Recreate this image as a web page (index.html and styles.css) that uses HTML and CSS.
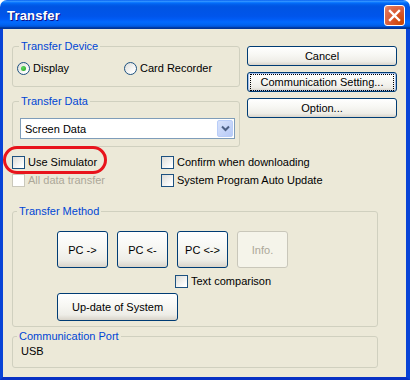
FILE: index.html
```html
<!DOCTYPE html>
<html>
<head>
    <title>Transfer</title>
    <link rel="stylesheet" href="styles.css">
</head>
<body>
    <div class="window">
        <div class="titlebar">
            <span class="title">Transfer</span>
            <button class="close" aria-label="Close">
                <svg width="13" height="13" viewBox="0 0 13 13">
                    <path d="M2 2 L11 11 M11 2 L2 11" stroke="#fff" stroke-width="2.4" stroke-linecap="square"/>
                </svg>
            </button>
        </div>
        <div class="client">
            <div class="top">
                <div class="left-col">
                    <fieldset class="group device">
                        <legend>Transfer Device</legend>
                        <div class="radios">
                            <label class="radio"><span class="dot checked"></span>Display</label>
                            <label class="radio"><span class="dot"></span>Card Recorder</label>
                        </div>
                    </fieldset>
                    <fieldset class="group data">
                        <legend>Transfer Data</legend>
                        <div class="combo">
                            <span class="combo-value">Screen Data</span>
                            <span class="combo-btn">
                                <svg width="9" height="7" viewBox="0 0 9 7">
                                    <path d="M1 1.5 L4.5 5 L8 1.5" fill="none" stroke="#4D6185" stroke-width="2"/>
                                </svg>
                            </span>
                        </div>
                    </fieldset>
                </div>
                <div class="side-buttons">
                    <button class="btn">Cancel</button>
                    <button class="btn default"><span class="focus">Communication Setting...</span></button>
                    <button class="btn">Option...</button>
                </div>
            </div>

            <div class="options">
                <label class="check marked"><span class="box"></span>Use Simulator</label>
                <label class="check"><span class="box"></span>Confirm when downloading</label>
                <label class="check disabled"><span class="box"></span>All data transfer</label>
                <label class="check"><span class="box"></span>System Program Auto Update</label>
            </div>

            <fieldset class="group method">
                <legend>Transfer Method</legend>
                <div class="method-body">
                    <div class="method-buttons">
                        <button class="btn big">PC -&gt;</button>
                        <button class="btn big">PC &lt;-</button>
                        <button class="btn big">PC &lt;-&gt;</button>
                        <button class="btn big" disabled>Info.</button>
                    </div>
                    <label class="check compare"><span class="box"></span>Text comparison</label>
                    <button class="btn update">Up-date of System</button>
                </div>
            </fieldset>

            <fieldset class="group port">
                <legend>Communication Port</legend>
                <div class="port-value">USB</div>
            </fieldset>
        </div>
    </div>
</body>
</html>
```

FILE: styles.css
```css
:root {
    --face-color: #ECE9D8;
    --group-border: #D0D0BF;
    --legend-color: #0046D5;
    --button-border: #003C74;
    --check-border: #1C5180;
    --disabled-text: #ACA899;
}

body {
    margin: 0;
    background: #ffffff;
    font-family: "Liberation Sans", Arial, sans-serif;
    font-size: 11px;
    color: #000;
}

.window {
    width: 410px;
    height: 380px;
    display: flex;
    flex-direction: column;
    border-radius: 7px 7px 0 0;
    overflow: hidden;
}

.titlebar {
    height: 29px;
    flex: none;
    display: flex;
    align-items: center;
    justify-content: space-between;
    padding: 0 5px 0 7px;
    box-sizing: border-box;
    background: linear-gradient(to bottom, #0058EE 0%, #3593FF 4%, #288EFF 6%, #127DFF 8%, #036FFC 10%, #0262EE 14%, #0057E5 20%, #0054E3 24%, #0055EB 56%, #005BF5 66%, #026AFE 76%, #0062EF 86%, #0052D6 92%, #0040AB 94%, #003092 100%);
}

.title {
    color: #fff;
    font-weight: bold;
    font-size: 13px;
    letter-spacing: 0.2px;
    text-shadow: 1px 1px 0 #0F1089;
    margin-top: 1px;
}

.close {
    width: 21px;
    height: 21px;
    padding: 0;
    margin-top: 2px;
    border: 1px solid #fff;
    border-radius: 3px;
    display: flex;
    align-items: center;
    justify-content: center;
    background: radial-gradient(circle at 85% 85%, #CC4600 0%, #D9572F 45%, #E17558 85%, #EC9F87 100%);
}

.client {
    flex: 1;
    background: var(--face-color);
    border-left: 3px solid #0843D6;
    border-right: 4px solid #0843D6;
    border-bottom: 3px solid #0831C4;
    padding: 10px 0 0 9px;
}

.top {
    display: flex;
    gap: 7px;
}

.left-col {
    width: 228px;
    display: flex;
    flex-direction: column;
}

/* group boxes keep zero side padding so the legend sits at a fixed inset */
.group {
    margin: 0;
    border: 1px solid var(--group-border);
    border-radius: 3px;
    padding: 0;
    min-width: 0;
}

.group legend {
    color: var(--legend-color);
    line-height: 14px;
    padding: 0 2px;
    margin-left: 6px;
}

.device {
    padding: 7px 0 10px;
}

.radios {
    display: grid;
    grid-template-columns: 107px auto;
    height: 16px;
    padding-left: 4px;
}

.radio {
    display: flex;
    align-items: center;
    gap: 3px;
}

.dot {
    width: 13px;
    height: 13px;
    box-sizing: border-box;
    border: 1px solid var(--check-border);
    border-radius: 50%;
    background: linear-gradient(135deg, #DCDCD7, #ffffff 80%);
    display: flex;
    align-items: center;
    justify-content: center;
}

.dot.checked::after {
    content: "";
    width: 5px;
    height: 5px;
    border-radius: 50%;
    background: radial-gradient(circle at 35% 35%, #5ED85E, #21A121);
}

.data {
    margin-top: 7px;
    padding: 10px 0 7px;
}

.combo {
    height: 21px;
    box-sizing: border-box;
    margin: 0 4px 0 7px;
    border: 1px solid #7F9DB9;
    background: #fff;
    display: flex;
    align-items: center;
    justify-content: space-between;
    padding: 1px;
}

.combo-value {
    padding-left: 3px;
}

.combo-btn {
    width: 16px;
    height: 17px;
    box-sizing: border-box;
    border: 1px solid #B9CDF8;
    border-radius: 2px;
    background: linear-gradient(135deg, #D8E3FC, #B7CAF6);
    display: flex;
    align-items: center;
    justify-content: center;
}

.side-buttons {
    width: 150px;
    margin-top: 7px;
    display: flex;
    flex-direction: column;
    gap: 6px;
}

.btn {
    font-family: inherit;
    font-size: 11px;
    color: #000;
    height: 20px;
    padding: 0;
    border: 1px solid var(--button-border);
    border-radius: 3px;
    background: linear-gradient(to bottom, #FFFFFF 0%, #F7F7F3 45%, #EEEDE7 80%, #D9D4CA 100%);
    display: flex;
    align-items: center;
    justify-content: center;
}

.btn.default {
    box-shadow: inset 0 0 0 1px #A6C0EC;
}

.btn .focus {
    outline: 1px dotted #000;
    outline-offset: 0;
    padding: 1px 4px;
    flex: 1;
    margin: 0 3px;
    line-height: 13px;
}

.btn:disabled {
    color: var(--disabled-text);
    border-color: #C9C7BA;
    background: #F5F4EA;
}

.options {
    position: relative;
    margin-top: 6px;
    display: grid;
    grid-template-columns: 149px auto;
    grid-auto-rows: 18px;
}

.check {
    display: flex;
    align-items: center;
    gap: 3px;
    white-space: nowrap;
}

.box {
    width: 13px;
    height: 13px;
    box-sizing: border-box;
    flex: none;
    border: 1px solid var(--check-border);
    background: linear-gradient(135deg, #DCDCD7, #ffffff 85%);
}

.check.disabled {
    color: var(--disabled-text);
}

.check.disabled .box {
    border-color: #CAC8BB;
    background: #ffffff;
}

/* red annotation ring around "Use Simulator" */
.check.marked {
    position: relative;
}

.check.marked::before {
    content: "";
    position: absolute;
    left: -9px;
    top: -7px;
    width: 104px;
    height: 28px;
    box-sizing: border-box;
    border: 3px solid #E8141C;
    border-radius: 14px;
}

.method {
    margin: 15px 28px 0 0;
    padding: 13px 0 5px;
}

.method legend,
.port legend {
    margin-left: 4px;
}

.method-body {
    padding-left: 44px;
}

.method-buttons {
    display: flex;
    gap: 9px;
}

.btn.big {
    width: 51px;
    height: 37px;
}

.compare {
    margin: 6px 0 0 118px;
    height: 14px;
}

.btn.update {
    margin-top: 5px;
    width: 121px;
    height: 28px;
}

.port {
    margin: 2px 28px 0 0;
    padding: 1px 0 9px;
}

.port-value {
    line-height: 14px;
    padding-left: 8px;
}
```
